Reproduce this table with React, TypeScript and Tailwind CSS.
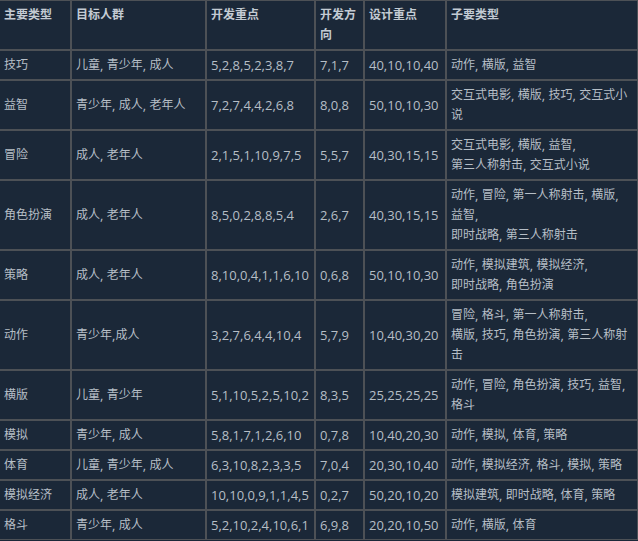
import React from 'react';

type Row = {
  main: string;
  target: string;
  dev: string;
  dir: string;
  design: string;
  sub: string[];
};

const rows: Row[] = [
  { main: '技巧', target: '儿童, 青少年, 成人', dev: '5,2,8,5,2,3,8,7', dir: '7,1,7', design: '40,10,10,40', sub: ['动作, 横版, 益智'] },
  { main: '益智', target: '青少年, 成人, 老年人', dev: '7,2,7,4,4,2,6,8', dir: '8,0,8', design: '50,10,10,30', sub: ['交互式电影, 横版, 技巧, 交互式小', '说'] },
  { main: '冒险', target: '成人, 老年人', dev: '2,1,5,1,10,9,7,5', dir: '5,5,7', design: '40,30,15,15', sub: ['交互式电影, 横版, 益智,', '第三人称射击, 交互式小说'] },
  { main: '角色扮演', target: '成人, 老年人', dev: '8,5,0,2,8,8,5,4', dir: '2,6,7', design: '40,30,15,15', sub: ['动作, 冒险, 第一人称射击, 横版,', '益智,', '即时战略, 第三人称射击'] },
  { main: '策略', target: '成人, 老年人', dev: '8,10,0,4,1,1,6,10', dir: '0,6,8', design: '50,10,10,30', sub: ['动作, 模拟建筑, 模拟经济,', '即时战略, 角色扮演'] },
  { main: '动作', target: '青少年,成人', dev: '3,2,7,6,4,4,10,4', dir: '5,7,9', design: '10,40,30,20', sub: ['冒险, 格斗, 第一人称射击,', '横版, 技巧, 角色扮演, 第三人称射', '击'] },
  { main: '横版', target: '儿童, 青少年', dev: '5,1,10,5,2,5,10,2', dir: '8,3,5', design: '25,25,25,25', sub: ['动作, 冒险, 角色扮演, 技巧, 益智,', '格斗'] },
  { main: '模拟', target: '青少年, 成人', dev: '5,8,1,7,1,2,6,10', dir: '0,7,8', design: '10,40,20,30', sub: ['动作, 模拟, 体育, 策略'] },
  { main: '体育', target: '儿童, 青少年, 成人', dev: '6,3,10,8,2,3,3,5', dir: '7,0,4', design: '20,30,10,40', sub: ['动作, 模拟经济, 格斗, 模拟, 策略'] },
  { main: '模拟经济', target: '成人, 老年人', dev: '10,10,0,9,1,1,4,5', dir: '0,2,7', design: '50,20,10,20', sub: ['模拟建筑, 即时战略, 体育, 策略'] },
  { main: '格斗', target: '青少年, 成人', dev: '5,2,10,2,4,10,6,1', dir: '6,9,8', design: '20,20,10,50', sub: ['动作, 横版, 体育'] },
];

// CJK runs are a touch smaller than the latin text in the original;
// align-top keeps the fallback font from stretching the line box
const Mixed = ({ text }: { text: string }) => (
  <>
    {text.split(/([\u3400-\u9fff]+)/).map((part, i) =>
      /[\u3400-\u9fff]/.test(part) ? (
        <span key={i} className="align-top text-[12px] leading-[20px]">{part}</span>
      ) : (
        <React.Fragment key={i}>{part}</React.Fragment>
      )
    )}
  </>
);

const th = 'h-[50px] border border-[#4d5156] px-[4px] py-[4px] text-left align-top font-bold text-[#c3cbd3]';
const td = 'border border-[#4d5156] px-[4px] py-[4px] align-middle text-[#b6bec6]';

export default function App() {
  return (
    <div className="h-[541px] w-[638px] overflow-hidden bg-[#1b2838] font-['Open_Sans','Noto_Sans_CJK_SC',sans-serif] text-[13px] leading-[20px]">
      <table className="-ml-px w-[639px] table-fixed border-separate border-spacing-0">
        <thead>
          <tr>
            <th className={`${th} w-[72px]`}><Mixed text="主要类型" /></th>
            <th className={`${th} w-[135px]`}><Mixed text="目标人群" /></th>
            <th className={`${th} w-[109px]`}><Mixed text="开发重点" /></th>
            <th className={`${th} w-[49px]`}><Mixed text="开发方向" /></th>
            <th className={`${th} w-[82px]`}><Mixed text="设计重点" /></th>
            <th className={`${th} w-[192px]`}><Mixed text="子要类型" /></th>
          </tr>
        </thead>
        <tbody>
          {rows.map((r) => (
            <tr key={r.main}>
              <td className={td}><Mixed text={r.main} /></td>
              <td className={td}><Mixed text={r.target} /></td>
              <td className={td}>{r.dev}</td>
              <td className={td}>{r.dir}</td>
              <td className={td}>{r.design}</td>
              <td className={td}>
                {r.sub.map((line, i) => (
                  <div key={i} className="whitespace-nowrap">
                    <Mixed text={line} />
                  </div>
                ))}
              </td>
            </tr>
          ))}
        </tbody>
      </table>
    </div>
  );
}
